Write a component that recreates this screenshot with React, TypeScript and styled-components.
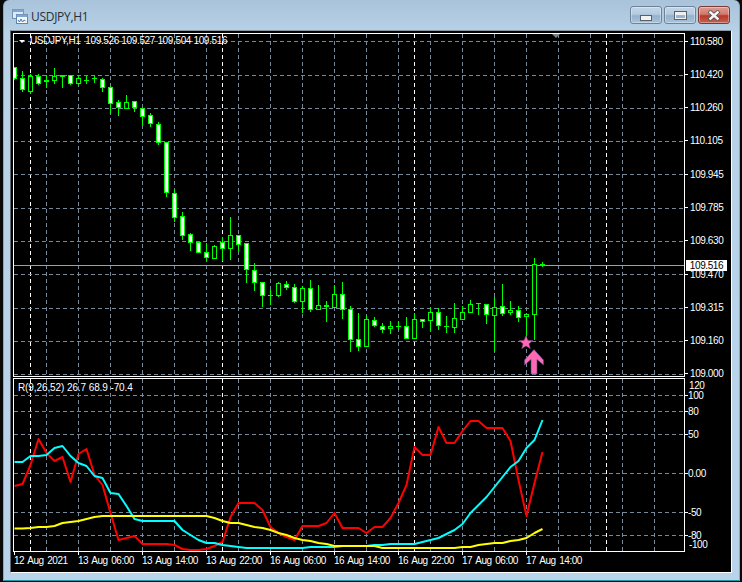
import React from "react";
import styled, { createGlobalStyle } from "styled-components";

const Global = createGlobalStyle`
  html, body { margin: 0; padding: 0; background: #0a0a0a; }
  #root { width: 742px; height: 582px; overflow: hidden; }
`;

const Desktop = styled.div`
  width: 742px;
  height: 582px;
  padding: 0 2px 1px 3px;
  box-sizing: border-box;
  background: #0a0a0a;
`;

const Window = styled.div`
  height: 581px;
  display: flex;
  flex-direction: column;
  box-sizing: border-box;
  padding: 0 7px 7px 6px;
  border-radius: 6px 6px 0 0;
  background: linear-gradient(180deg, #a9c3da 0%, #b8d2e8 6%, #b9d3ea 100%);
  border: 1px solid #8ba6bd;
  border-width: 0 1px 1px 1px;
  border-bottom-color: #1f9aa8;
  font-family: "Liberation Sans", Arial, sans-serif;
`;

const TitleBar = styled.div`
  height: 30px;
  flex: none;
  display: flex;
  align-items: center;
  padding: 3px 2px 0 2px;
  box-sizing: border-box;
`;

const AppIcon = styled.svg`
  width: 16px;
  height: 16px;
  flex: none;
`;

const Title = styled.div`
  margin-left: 3px;
  font: 12px "Open Sans", "Noto Sans", sans-serif;
  letter-spacing: -0.3px;
  color: #26303c;
  flex: 1;
`;

const Buttons = styled.div`
  display: flex;
  gap: 2px;
  margin-top: -3px;
`;

const WinButton = styled.div<{ $close?: boolean }>`
  width: 32px;
  height: 18px;
  box-sizing: border-box;
  border: 1px solid ${(p) => (p.$close ? "#7a3a38" : "#6f8398")};
  border-radius: 3px;
  display: flex;
  align-items: center;
  justify-content: center;
  box-shadow: inset 0 0 0 1px rgba(255, 255, 255, 0.35);
  background: ${(p) =>
    p.$close
      ? "linear-gradient(180deg,#dc9c92 0%,#d27a6e 45%,#b8392a 55%,#c8604e 100%)"
      : "linear-gradient(180deg,#c3d6e7 0%,#b4cbe0 45%,#94b2cd 55%,#a9c3da 100%)"};
`;

const MinGlyph = styled.div`
  width: 10px;
  height: 4px;
  margin-top: 5px;
  background: #f2f2f2;
  border: 1px solid #56616e;
`;

const MaxGlyph = styled.div`
  width: 9px;
  height: 5px;
  background: transparent;
  border: 1px solid #f0f0f0;
  outline: 1px solid #56616e;
  box-shadow: inset 0 2px 0 #f0f0f0;
`;

const CloseGlyph = styled.svg`
  width: 14px;
  height: 11px;
`;

const ChartFrame = styled.div`
  flex: 1;
  min-height: 0;
  background: #000;
  border: 1px solid #aebfce;
  border-right-color: #fff;
  border-bottom-color: #fff;
  border-left-color: #5d6a75;
  border-top-color: #8d9aa6;
  padding: 2px 0 0 2px;
  box-sizing: border-box;
  display: flex;
  flex-direction: column;
  color: #fff;
`;

const Row = styled.div<{ $h: number; $mt?: number }>`
  display: flex;
  flex: none;
  height: ${(p) => p.$h}px;
  margin-top: ${(p) => p.$mt ?? 0}px;
`;

const Pane = styled.div`
  position: relative;
  width: 672px;
  flex: none;
  box-sizing: border-box;
  border: 1px solid #fff;
`;

const PlotSvg = styled.svg`
  display: block;
  width: 100%;
  height: 100%;
`;

const Legend = styled.div`
  position: absolute;
  left: 16px;
  top: 1px;
  font-size: 10px;
  line-height: 12px;
  letter-spacing: -0.36px;
  white-space: pre;
  color: #fff;
`;

const SubLegend = styled(Legend)`
  left: 4px;
  top: 3px;
  letter-spacing: -0.1px;
`;

const LegendMark = styled.span`
  position: absolute;
  left: -11px;
  top: 5px;
  width: 0;
  height: 0;
  border-left: 3.5px solid transparent;
  border-right: 3.5px solid transparent;
  border-top: 3px solid #fff;
`;

const Axis = styled.div`
  position: relative;
  flex: 1;
  font-size: 10px;
  letter-spacing: -0.4px;
  color: #fff;
`;

const PriceAxis = styled(Axis)`
  flex: 1 0 auto;
  align-self: flex-start;
  display: flex;
  flex-direction: column;
  justify-content: space-between;
  padding: 2px 0 0 0;
  height: 347px;
  box-sizing: border-box;
`;

const PriceRow = styled.div`
  display: flex;
  align-items: center;
  height: 12px;
  gap: 2px;
`;

const Tick = styled.span`
  width: 3px;
  height: 1px;
  background: #fff;
  flex: none;
`;

const LastPrice = styled.div`
  position: absolute;
  left: 1px;
  top: 227px;
  width: 41px;
  height: 11px;
  line-height: 11px;
  background: #fff;
  color: #000;
  text-align: center;
`;

const SubLabel = styled.div<{ $plain?: boolean }>`
  position: absolute;
  display: flex;
  align-items: center;
  height: 12px;
  left: 0;
  padding-left: ${(p) => (p.$plain ? 4 : 0)}px;
  white-space: pre;
`;

const TimeAxis = styled.div`
  display: flex;
  flex: none;
  height: 20px;
  font-size: 10px;
  letter-spacing: -0.45px;
  word-spacing: 1.2px;
  color: #fff;
`;

const TimeCell = styled.div<{ $w: number }>`
  width: ${(p) => p.$w}px;
  flex: none;
  position: relative;
  padding: 3px 0 0 1px;
  box-sizing: border-box;
  line-height: 12px;
  white-space: pre;
  &::before {
    content: "";
    position: absolute;
    left: 1px;
    top: 0;
    width: 1px;
    height: 3px;
    background: #fff;
  }
`;

const PRICES = ["110.580", "110.420", "110.260", "110.105", "109.945", "109.785", "109.630", "109.470", "109.315", "109.160", "109.000"];
const SUB_LEVELS: [string, number][] = [["120", 385], ["100", 395], ["80", 411], ["50", 434], ["0.00", 473], ["-50", 512], ["-80", 535], ["-100", 544]];
const TIMES = ["12 Aug 2021", "13 Aug 06:00", "13 Aug 14:00", "13 Aug 22:00", "16 Aug 06:00", "16 Aug 14:00", "16 Aug 22:00", "17 Aug 06:00", "17 Aug 14:00"];

type C = [number, number, number, number, "b" | "h"];
const CANDLES: C[] = [
  [67, 78, 67, 80, "b"], [78, 89, 71, 92, "b"], [76, 91, 74, 94, "h"], [76, 83, 74, 85, "b"],
  [80, 81, 75, 88, "h"], [76, 80, 68, 84, "h"], [75, 76, 75, 88, "h"], [75, 83, 75, 85, "b"],
  [78, 83, 76, 85, "h"], [80, 80, 76, 84, "h"], [78, 78, 76, 83, "h"], [79, 87, 78, 92, "b"],
  [87, 103, 86, 114, "b"], [102, 107, 100, 116, "b"], [102, 108, 95, 108, "h"], [101, 107, 101, 112, "b"],
  [108, 116, 108, 125, "b"], [115, 123, 113, 127, "b"], [124, 142, 122, 145, "b"], [142, 192, 142, 197, "b"],
  [193, 217, 189, 222, "b"], [216, 235, 212, 240, "b"], [234, 242, 233, 251, "b"], [242, 252, 242, 252, "b"],
  [252, 257, 243, 261, "b"], [246, 258, 245, 258, "h"], [242, 248, 237, 261, "b"], [235, 248, 217, 260, "h"],
  [235, 244, 235, 251, "b"], [243, 269, 243, 283, "b"], [270, 282, 263, 291, "b"], [282, 295, 282, 307, "b"],
  [295, 295, 290, 305, "h"], [283, 295, 282, 297, "h"], [284, 287, 281, 290, "b"], [287, 301, 284, 303, "b"],
  [288, 301, 286, 313, "h"], [288, 309, 280, 312, "b"], [305, 309, 285, 310, "h"], [305, 306, 301, 322, "b"],
  [294, 307, 285, 307, "h"], [294, 309, 282, 319, "b"], [309, 339, 306, 352, "b"], [339, 346, 313, 351, "b"],
  [319, 346, 315, 347, "h"], [320, 325, 317, 327, "b"], [326, 329, 323, 333, "b"], [326, 328, 321, 334, "h"],
  [326, 326, 321, 330, "h"], [326, 338, 317, 338, "b"], [319, 338, 313, 338, "h"], [319, 321, 319, 328, "b"],
  [312, 320, 307, 331, "h"], [312, 325, 308, 330, "b"], [326, 326, 316, 333, "h"], [318, 327, 303, 333, "h"],
  [312, 319, 306, 319, "h"], [304, 312, 300, 312, "h"], [303, 303, 303, 315, "h"], [304, 314, 304, 324, "b"],
  [307, 315, 297, 352, "h"], [306, 313, 284, 316, "b"], [310, 312, 301, 315, "h"], [310, 317, 306, 322, "b"],
  [314, 316, 313, 343, "h"], [264, 314, 258, 340, "h"], [264, 265, 262, 267, "b"],
];

const RED = [486,484,465,439,453,461,457,482,454,449,475,485,513,540,538,536,544,544,544,544,545,549,550,550,549,546,542,517,503,503,503,510,527,533,537,540,526,526,526,523,513,528,528,528,533,527,527,518,503,485,447,455,455,427,443,443,431,421,421,428,428,428,441,480,516,483,452];
const CYAN = [462,462,456,456,455,448,446,456,463,466,476,478,493,494,506,519,521,521,521,521,521,530,535,540,543,543,545,546,547,548,548,548,548,548,548,548,548,547,547,547,547,546,546,546,546,545,545,544,544,544,544,542,540,538,534,530,524,513,505,497,487,477,467,461,448,440,420];
const YELLOW = [528.5,528.5,528,527,527,526,523,522,521,519,517,516,516,516,516,516,516,516,516,516,516,516,516,516,516,518,521,523,523,525,527,528,530,533,535,538,540,541,543,544,546,546,546,546,546,546,548,548,548,548,548,548,548,548,548,548,547,547,545,544,543,543,541,540,538,533,529];

const xAt = (i: number) => 14 + i * 8;
const pts = (a: number[]) => a.map((y, i) => `${xAt(i) + 0.5},${y}`).join(" ");

const gridV = Array.from({ length: 21 }, (_, i) => 46 + i * 32);
const sepV = [30, 222, 414, 606];
const gridH = [41, 75, 108, 141, 174, 208, 241, 274, 308, 341, 374];
const subH = [395, 411, 434, 473, 512, 535];

const Grid: React.FC<{ hs: number[]; y1: number; y2: number }> = ({ hs, y1, y2 }) => (
  <g shapeRendering="crispEdges" strokeWidth={1} strokeDasharray="4 3">
    {gridV.map((x) => <line key={x} x1={x + 0.5} x2={x + 0.5} y1={y1} y2={y2} stroke="#778899" />)}
    {sepV.map((x) => <line key={x} x1={x + 0.5} x2={x + 0.5} y1={y1} y2={y2} stroke="#fff" />)}
    {hs.map((y) => <line key={y} x1={14} x2={684} y1={y + 0.5} y2={y + 0.5} stroke="#778899" />)}
  </g>
);

const App: React.FC = () => (
  <>
    <Global />
    <Desktop>
      <Window>
        <TitleBar>
          <AppIcon viewBox="0 0 16 16">
            <rect x="0.5" y="0.5" width="11" height="9" fill="#dfeaf6" stroke="#6f93b8" />
            <rect x="0.5" y="0.5" width="11" height="2.5" fill="#7ea6cf" />
            <rect x="4.5" y="5.5" width="11" height="9" fill="#f4f8fc" stroke="#5f86ae" />
            <rect x="4.5" y="5.5" width="11" height="2.5" fill="#7ea6cf" />
            <path d="M6 11l1.5 2 1.5-3 1.5 3 1.5-2 1.5 1" fill="none" stroke="#3c6a9a" strokeWidth="0.9" />
          </AppIcon>
          <Title>USDJPY,H1</Title>
          <Buttons>
            <WinButton><MinGlyph /></WinButton>
            <WinButton><MaxGlyph /></WinButton>
            <WinButton $close>
              <CloseGlyph viewBox="0 0 14 11">
                <path d="M2 1l10 9M12 1L2 10" stroke="#4b4b4b" strokeWidth="4" />
                <path d="M2.5 1.5l9 8M11.5 1.5l-9 8" stroke="#f4f4f4" strokeWidth="2.4" />
              </CloseGlyph>
            </WinButton>
          </Buttons>
        </TitleBar>
        <ChartFrame>
          <Row $h={344}>
            <Pane>
              <PlotSvg viewBox="14 34 670 342">
                <Grid hs={gridH} y1={34} y2={376} />
                <line x1={14} x2={684} y1={265.5} y2={265.5} stroke="#a0a0a0" shapeRendering="crispEdges" />
                <g shapeRendering="crispEdges">
                  {CANDLES.map((c, i) => {
                    const x = xAt(i);
                    const [t, b, hi, lo, k] = c;
                    return (
                      <g key={i}>
                        <line x1={x + 0.5} x2={x + 0.5} y1={hi} y2={lo} stroke="#00ff00" />
                        {t === b ? (
                          <line x1={x - 2} x2={x + 3} y1={t + 0.5} y2={t + 0.5} stroke="#00ff00" />
                        ) : (
                          <rect x={x - 1.5} y={t + 0.5} width={4} height={b - t} fill={k === "b" ? "#fff" : "#000"} stroke="#00ff00" />
                        )}
                      </g>
                    );
                  })}
                </g>
                <polygon points="552,34 560,34 556,38" fill="#808080" />
                <polygon
                  points="526,335.5 527.9,340.3 533,340.6 529,343.8 530.4,348.8 526,346 521.6,348.8 523,343.8 519,340.6 524.1,340.3"
                  fill="#ff69b4"
                  stroke="#5b3f78"
                  strokeWidth="0.5"
                />
                <polygon
                  points="534,349.5 543.5,360 543.5,365 537,359.5 537,374 531,374 531,359.5 524.5,365 524.5,360"
                  fill="#ff69b4"
                  stroke="#4a4a90"
                  strokeWidth="0.6"
                />
              </PlotSvg>
              <Legend>
                <LegendMark />
                {"USDJPY,H1  109.526 109.527 109.504 109.516"}
              </Legend>
            </Pane>
            <PriceAxis>
              {PRICES.map((p) => (
                <PriceRow key={p}><Tick />{p}</PriceRow>
              ))}
              <LastPrice>109.516</LastPrice>
            </PriceAxis>
          </Row>
          <Row $h={174} $mt={1}>
            <Pane>
              <PlotSvg viewBox="14 379 670 172">
                <Grid hs={subH} y1={379} y2={551} />
                <g fill="none" strokeWidth="2" strokeLinejoin="round">
                  <polyline points={pts(RED)} stroke="#ff0000" />
                  <polyline points={pts(CYAN)} stroke="#00ffff" />
                  <polyline points={pts(YELLOW)} stroke="#ffff00" />
                </g>
              </PlotSvg>
              <SubLegend>R(9,26,52) 26.7 68.9 -70.4</SubLegend>
            </Pane>
            <Axis>
              {SUB_LEVELS.map(([l, y]) => {
                const plain = l === "120" || l === "-100";
                return (
                  <SubLabel key={l} $plain={plain} style={{ top: y - 378 - 6 }}>
                    {plain ? null : <Tick />}
                    {l}
                  </SubLabel>
                );
              })}
            </Axis>
          </Row>
          <TimeAxis>
            {TIMES.map((t) => <TimeCell key={t} $w={64}>{t}</TimeCell>)}
          </TimeAxis>
        </ChartFrame>
      </Window>
    </Desktop>
  </>
);

export default App;
